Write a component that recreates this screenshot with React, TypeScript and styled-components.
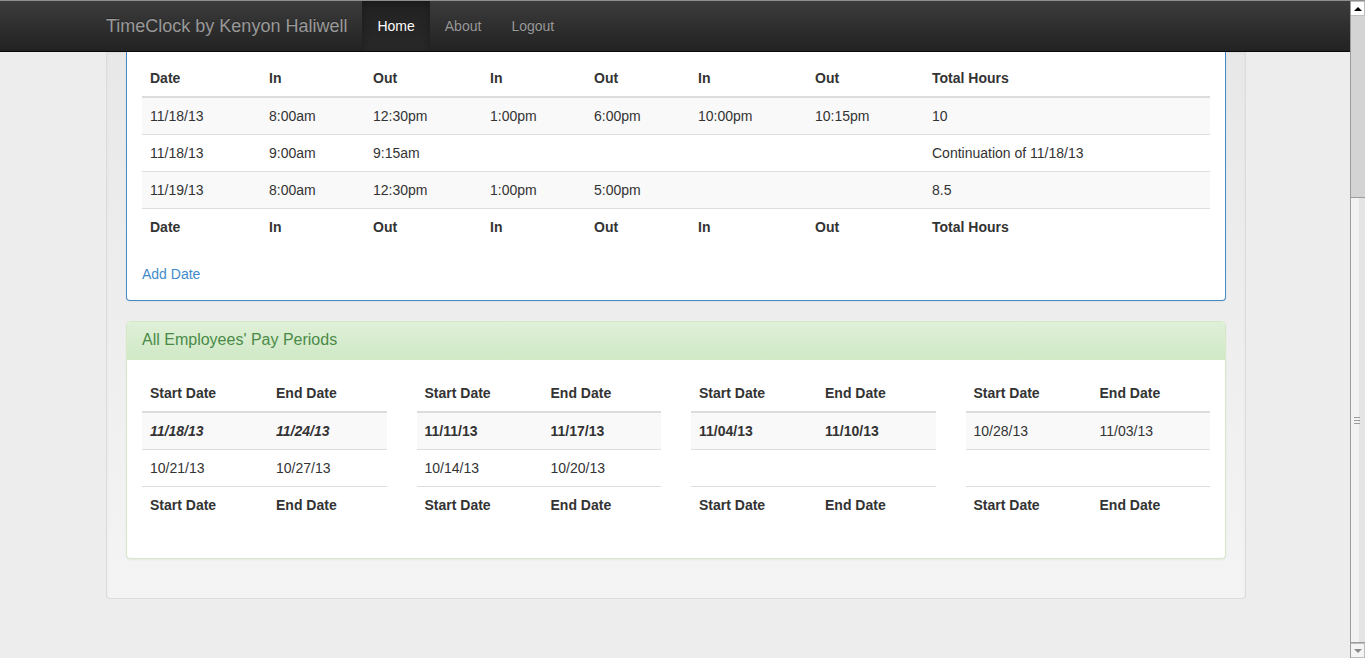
import styled, { createGlobalStyle, css } from "styled-components";

const GlobalStyle = createGlobalStyle`
  html, body {
    margin: 0;
    height: 100%;
    overflow: hidden;
  }

  body {
    background-color: #ededed;
    font-family: "Liberation Sans", Helvetica, Arial, sans-serif;
    font-size: 14px;
    line-height: 1.428571;
    color: #333;
  }

  * {
    box-sizing: border-box;
  }
`;

const Frame = styled.div`
  display: flex;
  height: 100vh;
  border-top: 1px solid #8f8f8f;
`;

const Viewport = styled.div`
  flex: 1;
  min-width: 0;
  display: flex;
  flex-direction: column;
  overflow: hidden;
`;

const Navbar = styled.nav`
  flex: none;
  height: 51px;
  background-image: linear-gradient(to bottom, #3c3c3c 0%, #222 100%);
  border-bottom: 1px solid #080808;
`;

const NavContainer = styled.div`
  width: 1170px;
  margin: 0 auto;
  padding: 0 15px;
  display: flex;
  transform: translateX(1px);
`;

const Brand = styled.a`
  margin-left: -15px;
  padding: 15px;
  height: 50px;
  font-size: 18px;
  line-height: 20px;
  color: #999;
  text-decoration: none;
  text-shadow: 0 -1px 0 rgba(0, 0, 0, .25);
`;

const NavLink = styled.a<{ $active?: boolean }>`
  display: block;
  padding: 15px;
  height: 50px;
  line-height: 20px;
  color: #999;
  text-decoration: none;
  text-shadow: 0 -1px 0 rgba(0, 0, 0, .25);

  ${p => p.$active && css`
    color: #fff;
    background-image: linear-gradient(to bottom, #222 0%, #282828 100%);
    box-shadow: inset 0 3px 9px rgba(0, 0, 0, .25);
  `}
`;

const Container = styled.div`
  width: 1170px;
  margin: 0 auto;
  padding: 0 15px;
  transform: translateX(1px);
`;

const Well = styled.div`
  padding: 0 19px 19px;
  background-image: linear-gradient(to bottom, #e8e8e8 0%, #f4f4f4 100%);
  border: 1px solid #dcdcdc;
  border-top: 0;
  border-radius: 0 0 4px 4px;
  box-shadow: inset 0 1px 3px rgba(0, 0, 0, .05), 0 1px 0 rgba(255, 255, 255, .1);
`;

const panelColors = {
  primary: "#428bca",
  success: "#d6e9c6",
};

const Panel = styled.div<{ $variant: keyof typeof panelColors; $cut?: boolean }>`
  margin-bottom: 20px;
  background-color: #fff;
  border: 1px solid ${p => panelColors[p.$variant]};
  border-radius: 4px;
  box-shadow: 0 1px 2px rgba(0, 0, 0, .05);

  ${p => p.$cut && css`
    border-top: 0;
    border-radius: 0 0 4px 4px;
  `}
`;

const PanelHeading = styled.div`
  padding: 9px 15px 10px;
  color: #4a8a47;
  background-image: linear-gradient(to bottom, #dff0d8 0%, #d0e9c6 100%);
  border-bottom: 1px solid #d6e9c6;
  border-radius: 3px 3px 0 0;

  h3 {
    margin: 0;
    font-size: 16px;
    font-weight: 500;
    line-height: 1.1;
  }
`;

const PanelBody = styled.div<{ $cut?: boolean }>`
  padding: ${p => (p.$cut ? "8px 15px 15px" : "15px")};
`;

const Table = styled.table`
  width: 100%;
  margin-bottom: 20px;
  border-collapse: collapse;
  border-spacing: 0;

  th, td {
    padding: 8px;
    line-height: 20px;
    text-align: left;
    vertical-align: top;
    border-top: 1px solid #ddd;
    white-space: nowrap;
  }

  th {
    font-weight: bold;
  }

  thead th {
    vertical-align: bottom;
    border-top: 0;
    border-bottom: 2px solid #ddd;
  }

  tbody tr:nth-child(odd) > td {
    background-color: #f9f9f9;
  }
`;

const Cell = styled.td<{ $mark?: "bold" | "current" }>`
  font-weight: ${p => (p.$mark ? "bold" : "normal")};
  font-style: ${p => (p.$mark === "current" ? "italic" : "normal")};
`;

const AddLink = styled.a`
  color: #428bca;
  text-decoration: none;
`;

const PeriodGrid = styled.div`
  display: grid;
  grid-template-columns: repeat(4, 1fr);
  column-gap: 30px;
`;

const Scrollbar = styled.div`
  flex: none;
  width: 15px;
  display: flex;
  flex-direction: column;
  background-color: #d4d4d4;
  border-left: 1px solid #9b9b9b;
`;

const ScrollButton = styled.div<{ $down?: boolean }>`
  flex: none;
  height: 15px;
  display: flex;
  align-items: center;
  justify-content: center;
  background-color: ${p => (p.$down ? "#f4f4f4" : "#fff")};
  border: 1px solid #bdbdbd;
  border-left: 0;

  &::after {
    content: "";
    border-left: 4px solid transparent;
    border-right: 4px solid transparent;
    ${p => p.$down
      ? css`border-top: 4px solid #8a8a8a;`
      : css`border-bottom: 4px solid #000;`}
  }
`;

const ScrollTrack = styled.div`
  flex: none;
  height: 181px;
`;

const ScrollThumb = styled.div`
  flex: 1;
  display: flex;
  align-items: center;
  justify-content: center;
  background-image: linear-gradient(to right, #f2f2f2 0%, #f2f2f2 55%, #e4e4e4 55%, #e4e4e4 100%);
  border-top: 1px solid #9b9b9b;
  border-bottom: 1px solid #9b9b9b;
`;

const Grip = styled.div`
  width: 6px;
  height: 7px;
  margin-right: 2px;
  background-image: repeating-linear-gradient(to bottom, #9a9a9a 0, #9a9a9a 1px, transparent 1px, transparent 3px);
`;

const punchHeaders = ["Date", "In", "Out", "In", "Out", "In", "Out", "Total Hours"];
const punchWidths = [119, 104, 117, 104, 104, 117, 117];

const punches = [
  ["11/18/13", "8:00am", "12:30pm", "1:00pm", "6:00pm", "10:00pm", "10:15pm", "10"],
  ["11/18/13", "9:00am", "9:15am", "", "", "", "", "Continuation of 11/18/13"],
  ["11/19/13", "8:00am", "12:30pm", "1:00pm", "5:00pm", "", "", "8.5"],
];

type Period = { start: string; end: string; mark?: "bold" | "current" };

const payPeriods: Period[][] = [
  [{ start: "11/18/13", end: "11/24/13", mark: "current" }, { start: "10/21/13", end: "10/27/13" }],
  [{ start: "11/11/13", end: "11/17/13", mark: "bold" }, { start: "10/14/13", end: "10/20/13" }],
  [{ start: "11/04/13", end: "11/10/13", mark: "bold" }, { start: "", end: "" }],
  [{ start: "10/28/13", end: "11/03/13" }, { start: "", end: "" }],
];

const PeriodTable = ({ periods }: { periods: Period[] }) => (
  <Table>
    <colgroup>
      <col style={{ width: 126 }} />
      <col />
    </colgroup>
    <thead>
      <tr><th>Start Date</th><th>End Date</th></tr>
    </thead>
    <tbody>
      {periods.map((p, idx) => (
        <tr key={idx}>
          <Cell $mark={p.mark}>{p.start || "\u00a0"}</Cell>
          <Cell $mark={p.mark}>{p.end || "\u00a0"}</Cell>
        </tr>
      ))}
    </tbody>
    <tfoot>
      <tr><th>Start Date</th><th>End Date</th></tr>
    </tfoot>
  </Table>
);

const App = () => {
  return (
    <>
      <GlobalStyle />
      <Frame>
        <Viewport>
          <Navbar>
            <NavContainer>
              <Brand href="#">TimeClock by Kenyon Haliwell</Brand>
              <NavLink href="#" $active>Home</NavLink>
              <NavLink href="#">About</NavLink>
              <NavLink href="#">Logout</NavLink>
            </NavContainer>
          </Navbar>
          <Container>
            <Well>
              <Panel $variant="primary" $cut>
                <PanelBody $cut>
                  <Table>
                    <colgroup>
                      {punchWidths.map((w, idx) => <col key={idx} style={{ width: w }} />)}
                      <col />
                    </colgroup>
                    <thead>
                      <tr>{punchHeaders.map((h, idx) => <th key={idx}>{h}</th>)}</tr>
                    </thead>
                    <tbody>
                      {punches.map((row, idx) => (
                        <tr key={idx}>
                          {row.map((value, i) => <td key={i}>{value}</td>)}
                        </tr>
                      ))}
                    </tbody>
                    <tfoot>
                      <tr>{punchHeaders.map((h, idx) => <th key={idx}>{h}</th>)}</tr>
                    </tfoot>
                  </Table>
                  <AddLink href="#">Add Date</AddLink>
                </PanelBody>
              </Panel>
              <Panel $variant="success">
                <PanelHeading>
                  <h3>All Employees' Pay Periods</h3>
                </PanelHeading>
                <PanelBody>
                  <PeriodGrid>
                    {payPeriods.map((periods, idx) => <PeriodTable key={idx} periods={periods} />)}
                  </PeriodGrid>
                </PanelBody>
              </Panel>
            </Well>
          </Container>
        </Viewport>
        <Scrollbar>
          <ScrollButton />
          <ScrollTrack />
          <ScrollThumb>
            <Grip />
          </ScrollThumb>
          <ScrollButton $down />
        </Scrollbar>
      </Frame>
    </>
  );
};

export default App;
